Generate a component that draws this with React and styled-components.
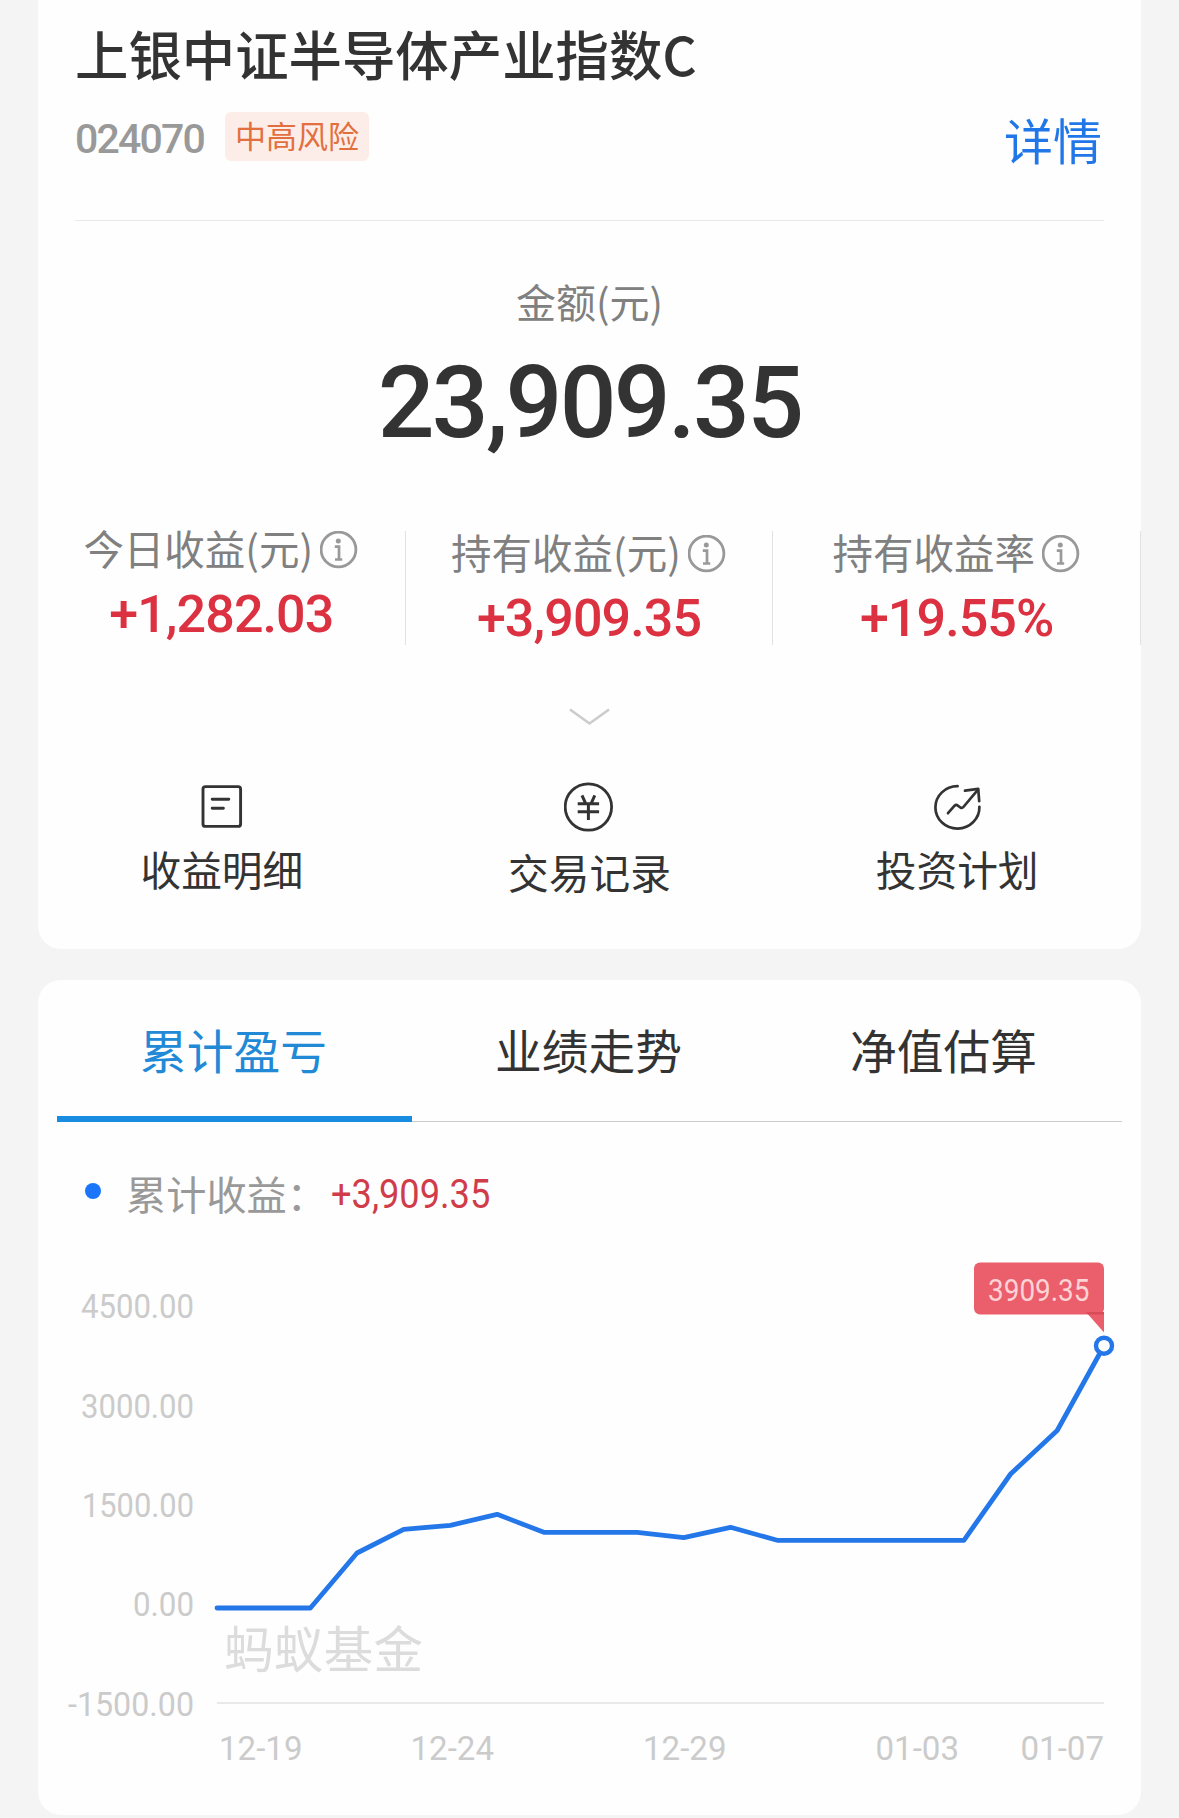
import React from "react";
import styled, { createGlobalStyle } from "styled-components";

const CJK = `"Noto Sans CJK SC", "Noto Sans", sans-serif`;
const NUM = `Roboto, "Noto Sans CJK SC", sans-serif`;

const GlobalStyle = createGlobalStyle`
  *, *::before, *::after { box-sizing: border-box; }
  body { margin: 0; background: #f4f4f4; font-family: ${CJK}; color: #333; }
`;

const Page = styled.main`
  width: 1179px;
  height: 1818px;
  padding: 0 38px;
  overflow: hidden;
  background: #f4f4f4;
`;

const Card = styled.section`
  height: ${(p) => p.$height}px;
  background: #fefefe;
  border-radius: ${(p) => (p.$flush ? "0 0 23px 23px" : "23px")};
  margin-bottom: 31px;
  overflow: hidden;
`;

const Header = styled.header`
  margin: 0 37px;
  padding: 22px 0 54px;
  border-bottom: 1px solid #e9e9e9;
`;

const Title = styled.h1`
  margin: 0 0 28px;
  font-size: 53.4px;
  font-weight: 500;
  line-height: 62px;
  white-space: nowrap;
`;

const Meta = styled.div`
  display: flex;
  align-items: flex-start;
  height: 54px;
`;

const Code = styled.span`
  width: 150px;
  font: 500 41px/54px ${NUM};
  letter-spacing: -1.8px;
  color: #999;
`;

const RiskTag = styled.span`
  height: 49px;
  padding: 0 10px;
  border-radius: 6px;
  background: #fdede8;
  color: #e2703f;
  font-size: 31px;
  line-height: 46px;
`;

const DetailLink = styled.a`
  margin-left: auto;
  padding-right: 2px;
  color: #2277e8;
  font-size: 49px;
  line-height: 53px;
`;

const Balance = styled.div`
  padding-top: 56px;
  text-align: center;
`;

const BalanceLabel = styled.div`
  font-size: 40px;
  line-height: 48px;
  color: #808080;
`;

const BalanceValue = styled.div`
  margin-top: 28px;
  font: 500 100px/100px ${NUM};
  letter-spacing: -2.7px;
`;

const Stats = styled.div`
  display: grid;
  grid-template-columns: repeat(3, 1fr);
  height: 113px;
  margin-top: 78px;
`;

const Stat = styled.div`
  display: flex;
  flex-direction: column;
  align-items: center;
  padding-top: ${(p) => p.$drop}px;
  border-right: 1px solid #e2e2e2;
`;

const StatLabel = styled.div`
  display: flex;
  align-items: center;
  gap: 7px;
  height: 34px;
  font-size: 40.5px;
  line-height: 34px;
  color: #808080;
  white-space: nowrap;

  svg { flex: none; margin-top: 5px; }
`;

const StatValue = styled.div`
  margin-top: 24px;
  font: 500 52px/52px ${NUM};
  letter-spacing: -0.9px;
  color: #db3141;
`;

const Expand = styled.div`
  display: flex;
  justify-content: center;
  height: 18px;
  margin-top: 64px;
`;

const Actions = styled.nav`
  display: grid;
  grid-template-columns: repeat(3, 1fr);
  margin-top: 56px;
`;

const Action = styled.div`
  display: flex;
  flex-direction: column;
  align-items: center;
  gap: ${(p) => p.$gap}px;
  font-size: 40.7px;
  line-height: 44px;
`;

const Tabs = styled.div`
  display: grid;
  grid-template-columns: repeat(3, 1fr);
  height: 142px;
  margin: 0 19px;
  box-shadow: inset 0 -1px #ccc;
`;

const Tab = styled.div`
  height: 142px;
  padding-right: 2px;
  text-align: center;
  font-size: 46.7px;
  line-height: 138px;
  color: ${(p) => (p.$active ? "#2189d6" : "#333")};
  border-bottom: ${(p) => (p.$active ? "6px solid #178ce0" : "none")};
`;

const Legend = styled.div`
  display: flex;
  align-items: center;
  height: 40px;
  margin-top: 49px;
  padding-left: 47px;
`;

const Dot = styled.i`
  width: 16px;
  height: 16px;
  margin-right: 25px;
  border-radius: 50%;
  background: #1a75fb;
`;

const LegendLabel = styled.span`
  width: 205px;
  padding-top: 3px;
  font-size: 40.2px;
  line-height: 40px;
  color: #999;
`;

const LegendValue = styled.span`
  padding-top: 8px;
  font: 400 40px/40px ${NUM};
  color: #d03c49;
  transform: scaleX(0.905);
  transform-origin: left;
`;

const ChartSvg = styled.svg`
  display: block;
  width: 1103px;
  height: 604px;
`;

const AxisText = styled.text`
  font: 400 33.5px ${NUM};
  fill: #cbcbcb;
`;

const Watermark = styled.text`
  font: 400 49.5px ${CJK};
  fill: #dcdcdc;
`;

const TipText = styled.text`
  font: 400 31.5px ${NUM};
  fill: #fdd3d6;
`;

const InfoIcon = () => (
  <svg width="39" height="39" viewBox="0 0 39 39" fill="none" stroke="#999">
    <circle cx="18.5" cy="18.5" r="17.4" strokeWidth="2.8" />
    <circle cx="18.3" cy="10" r="2.5" fill="#999" stroke="none" />
    <path d="M14.8 15.7h4.2v12.5M15 28.5h7.2" strokeWidth="2.7" />
  </svg>
);

const DetailIcon = () => (
  <svg width="50" height="50" viewBox="0 0 50 50" fill="none" stroke="#333" strokeWidth="2.9" strokeLinecap="round">
    <rect x="6" y="4.6" width="37.6" height="39.8" rx="2.5" />
    <path d="M15.2 17.2h16.6M15.2 26.2h11.2" />
  </svg>
);

const YuanIcon = () => (
  <svg width="50" height="50" viewBox="0 0 50 50" fill="none" stroke="#333" strokeWidth="2.8">
    <circle cx="24.4" cy="25" r="23.2" />
    <path d="M18 13.4l3.6 8M30.8 13.4l-3.6 8M13.7 21.8h21.4M13.7 29.8h21.4M24.4 22v16" strokeWidth="3" />
  </svg>
);

const PlanIcon = () => (
  <svg width="50" height="50" viewBox="0 0 50 50" fill="none" stroke="#333" strokeWidth="2.7" strokeLinecap="round" strokeLinejoin="round">
    <path d="M25.6 4.2A22 21.2 0 1 0 47.4 24.8" />
    <path d="M16 31.2l6.6-7.5q1.6-1.6 3.2 0l2.6 1.8q1.8 1 3-.5L46 7.6" />
    <path d="M33 8.7l13.2-1.8 1 12.2" />
  </svg>
);

const stats = [
  { label: "今日收益(元)", value: "+1,282.03", drop: 0 },
  { label: "持有收益(元)", value: "+3,909.35", drop: 4 },
  { label: "持有收益率", value: "+19.55%", drop: 4 },
];

const actions = [
  { label: "收益明细", icon: DetailIcon, gap: 15 },
  { label: "交易记录", icon: YuanIcon, gap: 18 },
  { label: "投资计划", icon: PlanIcon, gap: 15 },
];

const tabs = ["累计盈亏", "业绩走势", "净值估算"];

const yTicks = [
  { label: "4500.00", width: 113 },
  { label: "3000.00", width: 113 },
  { label: "1500.00", width: 112 },
  { label: "0.00", width: 61 },
  { label: "-1500.00", width: 126 },
];

const xTicks = [
  { label: "12-19", x: 181 },
  { label: "12-24", x: 372.5 },
  { label: "12-29", x: 605 },
  { label: "01-03", x: 837.5 },
  { label: "01-07", x: 982.5 },
];

// One vertical position per day, 12-19 through 01-07.
const series = [
  397, 397, 397, 342, 318.3, 314.3, 303.3, 321.3, 321.3, 321.3,
  326.7, 316.3, 329.3, 329.3, 329.3, 329.3, 329.3, 263, 219.5, 135,
];
const points = series.map((y, i) => `${(179 + i * 46.68).toFixed(1)},${y}`).join(" ");

const Chart = () => (
  <ChartSvg viewBox="0 0 1103 604">
    {yTicks.map((t, i) => (
      <AxisText key={t.label} x={156 - t.width} y={107.3 + i * 99.35} textLength={t.width} lengthAdjust="spacingAndGlyphs">
        {t.label}
      </AxisText>
    ))}
    <Watermark x="186" y="457" textLength="199" lengthAdjust="spacing">蚂蚁基金</Watermark>
    <path d="M179 492H1066" stroke="#e9e9e9" strokeWidth="2" />
    {xTicks.map((t) => (
      <AxisText key={t.label} x={t.x} y="548.8" textLength="83.5" lengthAdjust="spacingAndGlyphs">
        {t.label}
      </AxisText>
    ))}
    <polyline points={points} fill="none" stroke="#2477e8" strokeWidth="4.8" strokeLinecap="round" strokeLinejoin="round" />
    <circle cx="1066" cy="134.7" r="8" fill="#fff" stroke="#2477e8" strokeWidth="4.4" />
    <rect x="936" y="51.5" width="130" height="52" rx="6" fill="#ea5f6b" />
    <path d="M1048 101H1066V121.5Z" fill="#ea5f6b" />
    <path d="M1048 101H1066V103.5H1050Z" fill="#da4b59" />
    <TipText x="950" y="90" textLength="101.5" lengthAdjust="spacingAndGlyphs">3909.35</TipText>
  </ChartSvg>
);

export default function App() {
  return (
    <Page>
      <GlobalStyle />
      <Card $height={949} $flush>
        <Header>
          <Title>上银中证半导体产业指数C</Title>
          <Meta>
            <Code>024070</Code>
            <RiskTag>中高风险</RiskTag>
            <DetailLink>详情</DetailLink>
          </Meta>
        </Header>
        <Balance>
          <BalanceLabel>金额(元)</BalanceLabel>
          <BalanceValue>23,909.35</BalanceValue>
        </Balance>
        <Stats>
          {stats.map((s) => (
            <Stat key={s.label} $drop={s.drop}>
              <StatLabel>
                {s.label}
                <InfoIcon />
              </StatLabel>
              <StatValue>{s.value}</StatValue>
            </Stat>
          ))}
        </Stats>
        <Expand>
          <svg width="41" height="18" viewBox="0 0 41 18" fill="none" stroke="#ccc" strokeWidth="2.6">
            <path d="M1 1.5L20.5 15.5L40 1.5" />
          </svg>
        </Expand>
        <Actions>
          {actions.map(({ label, icon: Icon, gap }) => (
            <Action key={label} $gap={gap}>
              <Icon />
              {label}
            </Action>
          ))}
        </Actions>
      </Card>
      <Card $height={835}>
        <Tabs>
          {tabs.map((t, i) => (
            <Tab key={t} $active={i === 0}>{t}</Tab>
          ))}
        </Tabs>
        <Legend>
          <Dot />
          <LegendLabel>累计收益：</LegendLabel>
          <LegendValue>+3,909.35</LegendValue>
        </Legend>
        <Chart />
      </Card>
    </Page>
  );
}
